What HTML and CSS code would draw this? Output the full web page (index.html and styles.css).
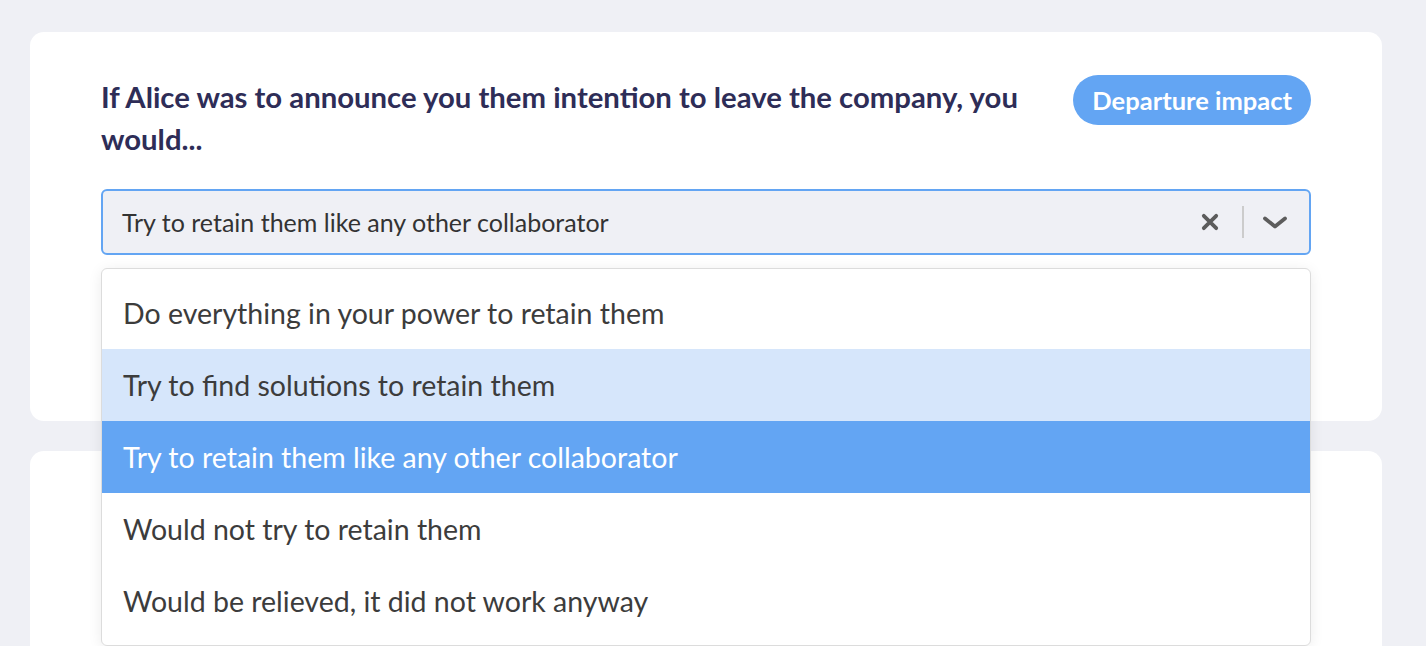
FILE: index.html
```html
<!DOCTYPE html>
<html lang="en">
<head>
  <meta charset="UTF-8">
  <meta name="viewport" content="width=device-width, initial-scale=1.0">
  <title>Departure impact</title>
  <link rel="stylesheet" href="styles.css">
</head>
<body>
  <div class="page">
    <div class="card">
      <div class="question-head">
        <h2 class="question">If Alice was to announce you them intention to leave the company, you would...</h2>
        <span class="tag">Departure impact</span>
      </div>

      <div class="select">
        <div class="select-control">
          <span class="select-value">Try to retain them like any other collaborator</span>
          <div class="select-icons">
            <svg class="icon-clear" width="18" height="18" viewBox="0 0 18 18">
              <path d="M2.8 2.8 L15.2 15.2 M15.2 2.8 L2.8 15.2" stroke="#5c5c5c" stroke-width="3.8" stroke-linecap="round"/>
            </svg>
            <span class="select-sep"></span>
            <svg class="icon-chevron" width="26" height="15" viewBox="0 0 26 15">
              <path d="M3 3.5 L13 11.5 L23 3.5" fill="none" stroke="#5c5c5c" stroke-width="3.8" stroke-linecap="round" stroke-linejoin="round"/>
            </svg>
          </div>
        </div>

        <!-- open menu -->
        <ul class="select-menu">
          <li class="option">Do everything in your power to retain them</li>
          <li class="option focused">Try to find solutions to retain them</li>
          <li class="option selected">Try to retain them like any other collaborator</li>
          <li class="option">Would not try to retain them</li>
          <li class="option">Would be relieved, it did not work anyway</li>
        </ul>
      </div>
    </div>

    <div class="card card-next"></div>
  </div>
</body>
</html>
```

FILE: styles.css
```css
html, body {
  height: 100%;
  overflow: hidden;
}
body {
  margin: 0;
  padding: 0;
  background: #eff0f5;
  font-family: 'Lato', 'Open Sans', sans-serif;
  color: #333;
}
.page {
  padding: 32px 44px 0 30px;
  display: flex;
  flex-direction: column;
  gap: 30px;
}
.card {
  background: #fff;
  border-radius: 14px;
  padding: 44px 71px 166px 71px;
}
.card-next {
  height: 260px;
  padding: 0;
}
.question-head {
  display: flex;
  justify-content: space-between;
  align-items: flex-start;
  gap: 40px;
}
.question {
  margin: 0;
  font-size: 29.3px;
  font-weight: 700;
  line-height: 42px;
  color: #2e2d57;
}
.tag {
  flex-shrink: 0;
  margin-top: -1px;
  height: 50px;
  line-height: 50px;
  padding: 0 19px;
  border-radius: 25px;
  background: #63a5f3;
  color: #fff;
  font-weight: 700;
  font-size: 25.5px;
}
.select {
  position: relative;
  margin-top: 29px;
}
.select-control {
  height: 62px;
  border: 2px solid #63a5f3;
  border-radius: 6px;
  background: #eff0f5;
  display: flex;
  align-items: center;
  padding-left: 19px;
}
.select-value {
  flex: 1;
  font-size: 25px;
  color: #333;
}
.select-icons {
  display: flex;
  align-items: center;
  padding-right: 21px;
}
.icon-clear {
  margin-right: 23px;
}
.select-sep {
  width: 2px;
  height: 32px;
  background: #cccccc;
  margin-right: 18px;
}
.select-menu {
  position: absolute;
  top: 79px;
  left: 0;
  right: 0;
  margin: 0;
  padding: 8px 0;
  list-style: none;
  background: #fff;
  border: 1px solid #dcdcdc;
  border-radius: 6px;
  box-shadow: 0 2px 14px rgba(0, 0, 0, 0.08);
}
.option {
  height: 72px;
  line-height: 72px;
  padding-left: 21px;
  font-size: 28.5px;
  color: #3c3c3c;
}
.option.focused {
  background: #d6e6fb;
}
.option.selected {
  background: #63a5f3;
  color: #fff;
}
```
